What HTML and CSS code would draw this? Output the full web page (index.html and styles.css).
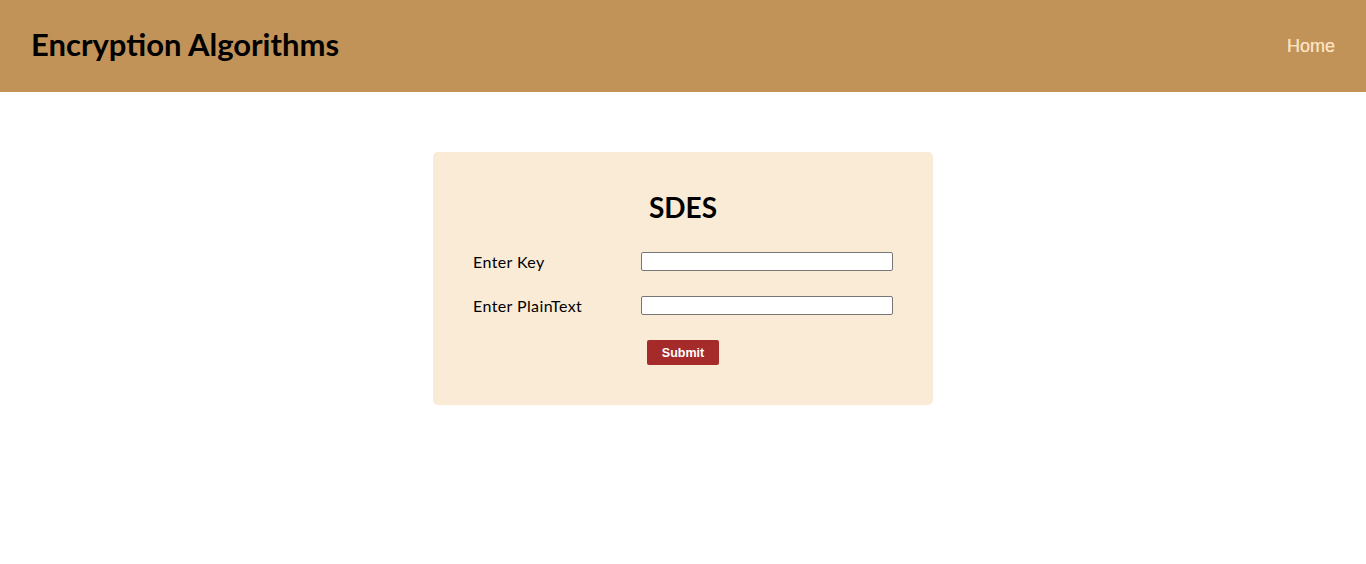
FILE: index.html
```html
<!DOCTYPE html>
<html lang="en">
<head>
<meta charset="utf-8">
<title>SDES</title>
<link rel="stylesheet" href="styles.css">
</head>
<body>
<header class="topbar">
  <h1 class="brand">Encryption Algorithms</h1>
  <a class="nav-link" href="#">Home</a>
</header>
<main class="content">
  <form class="card">
    <h2 class="card-title">SDES</h2>
    <div class="field">
      <label class="field-label" for="key">Enter Key</label>
      <input class="field-input" id="key" type="text">
    </div>
    <div class="field">
      <label class="field-label" for="plain">Enter PlainText</label>
      <input class="field-input" id="plain" type="text">
    </div>
    <div class="actions">
      <button class="submit" type="button">Submit</button>
    </div>
  </form>
</main>
</body>
</html>
```
FILE: styles.css
```css
* { box-sizing: border-box; }
html, body { margin: 0; padding: 0; background: #ffffff; }
body { font-family: "Trebuchet MS", Lato, "Open Sans", sans-serif; color: #000; }

.topbar {
  height: 92px;
  background: #c29359;
  display: flex;
  align-items: center;
  justify-content: space-between;
  padding: 0 31px 0 31px;
}
.brand {
  margin: 0 0 3px;
  font-size: 31px;
  font-weight: 700;
  line-height: 1;
}
.nav-link {
  font-family: "Liberation Sans", Arial, sans-serif;
  font-size: 18px;
  color: #fbe2bf;
  text-decoration: none;
  text-shadow: 0 0 0.4px #fbe2bf;
}

.content {
  display: flex;
  justify-content: center;
  padding-top: 60px;
}
.card {
  width: 500px;
  background: #faebd7;
  border-radius: 5px;
  padding: 38px 40px 40px;
  display: flex;
  flex-direction: column;
}
.card-title {
  margin: 0 0 28px;
  text-align: center;
  font-size: 28px;
  line-height: 34px;
  font-weight: 700;
}
.field {
  display: grid;
  grid-template-columns: 168px 252px;
  align-items: center;
  height: 19px;
  margin-bottom: 25px;
}
.field-label {
  font-size: 16px;
  letter-spacing: 0.4px;
}
.field-input {
  width: 252px;
  height: 19px;
  border: 1px solid #767676;
  border-radius: 2px;
  background: #fff;
  padding: 0 2px;
}
.actions {
  display: flex;
  justify-content: center;
}
.submit {
  width: 72px;
  height: 25px;
  background: #a52a2a;
  color: #fff;
  border: none;
  border-radius: 2px;
  font-family: "Liberation Sans", Arial, sans-serif;
  font-weight: 700;
  font-size: 12.5px;
  padding: 0;
}
```
